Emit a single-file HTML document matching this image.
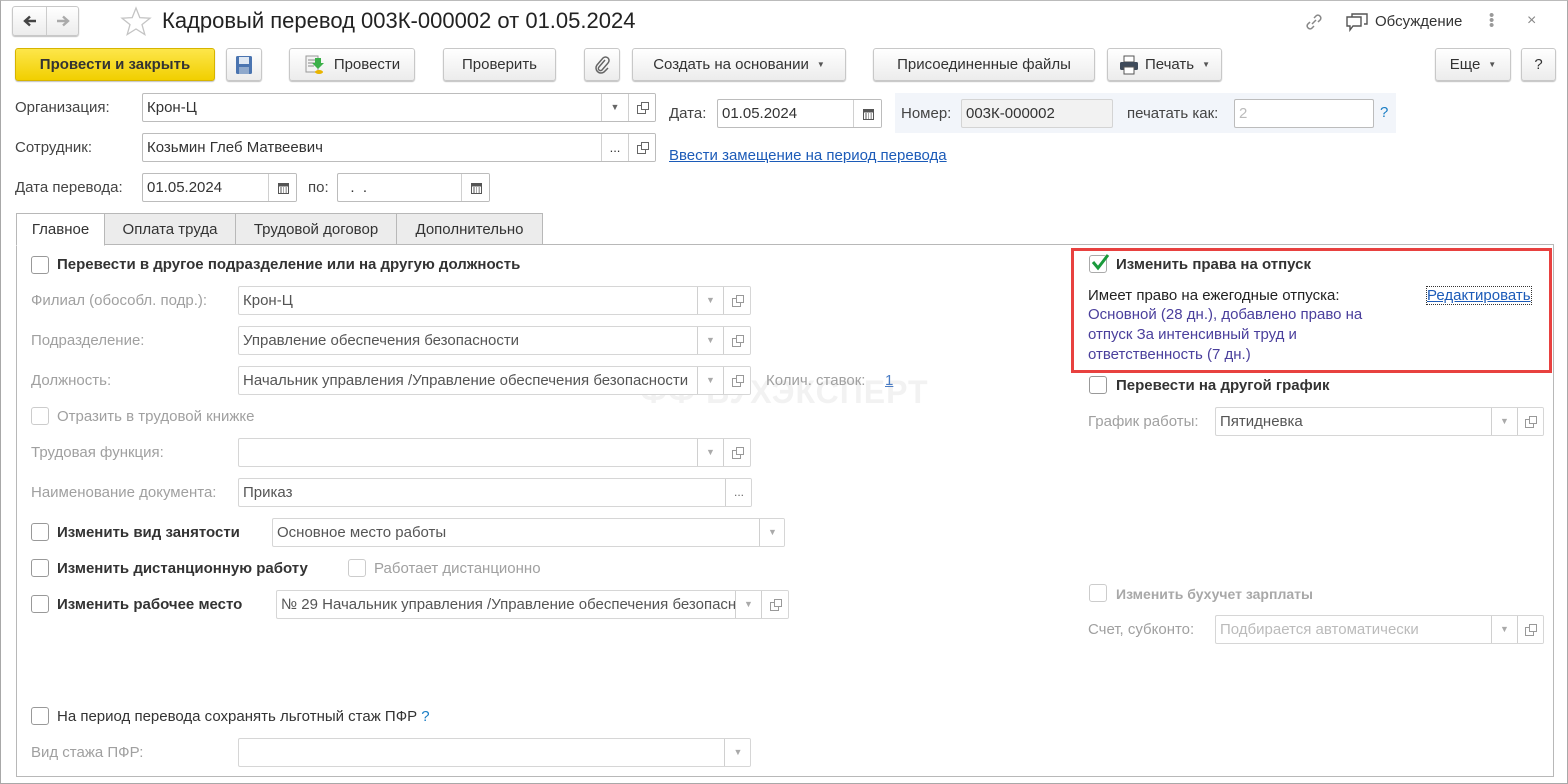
<!DOCTYPE html>
<html><head><meta charset="utf-8">
<style>
*{box-sizing:border-box;margin:0;padding:0}
body{width:1568px;height:784px;background:#fff;font-family:"Liberation Sans",Arial,sans-serif;font-size:15px;color:#333;position:relative;overflow:hidden}
.a{position:absolute;white-space:nowrap}
.btn{position:absolute;height:33px;border:1px solid #c8c8c8;border-radius:3px;background:linear-gradient(#fff,#ececec);box-shadow:0 1px 1px rgba(0,0,0,.25);font-size:15px;color:#333;display:flex;align-items:center;justify-content:center}
.inp{position:absolute;height:29px;border:1px solid #bcbcbc;border-radius:2px;background:#fff;font-size:15px;padding-left:4px;line-height:27px;color:#333;overflow:hidden;white-space:nowrap}
.dis{border-color:#d6d6d6;color:#555}
.seg{position:absolute;top:0;bottom:0;border-left:1px solid #d0d0d0;background:#fff;display:flex;align-items:center;justify-content:center;font-size:9px;color:#666}
.lbl{position:absolute;white-space:nowrap;color:#444;font-size:15px}
.g{color:#a0a0a0}
.cb{position:absolute;width:18px;height:18px;border:1px solid #999;border-radius:3px;background:#fff}
.cbd{border-color:#ccc}
.b{font-weight:bold;color:#333}
.tab{position:absolute;top:213px;height:32px;border:1px solid #b8b8b8;background:#ececec;font-size:15px;color:#333;display:flex;align-items:center;justify-content:center}
</style></head><body>
<div class="a" style="left:0;top:0;width:1568px;height:784px;border:1px solid #a8a8a8;border-top-color:#bbb"></div>
<!-- nav -->
<div class="btn" style="left:12px;top:6px;width:67px;height:30px;justify-content:flex-start">
 <span style="width:34px;display:flex;justify-content:center"><svg width="14" height="12" viewBox="0 0 14 12"><path d="M13 6 H3 M7 1.5 L2 6 L7 10.5" fill="none" stroke="#444" stroke-width="2.4"/></svg></span><span style="width:1px;height:28px;background:#ccc"></span><span style="width:31px;display:flex;justify-content:center"><svg width="14" height="12" viewBox="0 0 14 12"><path d="M1 6 H11 M7 1.5 L12 6 L7 10.5" fill="none" stroke="#aaa" stroke-width="2.4"/></svg></span>
</div>
<svg class="a" style="left:120px;top:6px" width="32" height="30" viewBox="0 0 32 30"><path d="M16 2 L19.8 11.6 L30 12.2 L22 18.6 L24.8 28.5 L16 23 L7.2 28.5 L10 18.6 L2 12.2 L12.2 11.6 Z" fill="none" stroke="#c4c4c4" stroke-width="1.3"/></svg>
<div class="a" style="left:162px;top:8px;font-size:22px;color:#222">Кадровый перевод 003К-000002 от 01.05.2024</div>
<svg class="a" style="left:1303px;top:11px" width="22" height="22" viewBox="0 0 22 22" fill="none" stroke="#888" stroke-width="1.5"><path d="M9 13 L13 9"/><path d="M7 11 L4.5 13.5 a3 3 0 0 0 4 4 L11 15"/><path d="M11 7 L13.5 4.5 a3 3 0 0 1 4 4 L15 11"/></svg>
<svg class="a" style="left:1345px;top:12px" width="24" height="22" viewBox="0 0 24 22" fill="none" stroke="#555" stroke-width="1.4"><path d="M2 5 h14 v9 h-8 l-3 4 v-4 h-3 z"/><path d="M7 5 v-3 h15 v10 h-3"/></svg>
<div class="a" style="left:1375px;top:13px;font-size:15px;color:#333">Обсуждение</div>
<div class="a" style="left:1489px;top:13px;width:4px;font-size:15px;color:#999;line-height:5px">•<br>•<br>•</div>
<div class="a" style="left:1527px;top:12px;font-size:16px;color:#888">×</div>
<!-- toolbar -->
<div class="btn" style="left:15px;top:48px;width:200px;background:linear-gradient(#fde64a,#f1cf00);border-color:#d6b400;font-weight:bold;color:#333">Провести и закрыть</div>
<div class="btn" style="left:226px;top:48px;width:36px"><svg width="18" height="20" viewBox="0 0 18 20"><rect x="1" y="1" width="16" height="18" rx="1.5" fill="#4a74b0"/><rect x="4" y="2" width="10" height="7" fill="#dfe8f3"/><rect x="4" y="12" width="10" height="7" fill="#8fa9cc"/></svg></div>
<div class="btn" style="left:289px;top:48px;width:126px"><svg width="22" height="22" viewBox="0 0 22 22" style="margin-right:8px"><rect x="2" y="2" width="12" height="16" fill="#f4f4f4" stroke="#999"/><path d="M4 6h8M4 9h8M4 12h6" stroke="#888"/><path d="M11 4 h6 v5 h3 l-6 6 l-6-6 h3z" fill="#3cb04a"/><ellipse cx="15" cy="18" rx="4" ry="2" fill="#e8b400"/></svg>Провести</div>
<div class="btn" style="left:443px;top:48px;width:113px">Проверить</div>
<div class="btn" style="left:584px;top:48px;width:36px"><svg width="18" height="20" viewBox="0 0 18 20" fill="none" stroke="#666" stroke-width="1.5"><path d="M12 5 L6 12 a2 2 0 0 0 3 3 L15 8 a3.5 3.5 0 0 0 -5 -5 L4 10 a5 5 0 0 0 7 7 L15 13"/></svg></div>
<div class="btn" style="left:632px;top:48px;width:214px">Создать на основании <span style="font-size:8px;margin-left:8px;color:#555">▼</span></div>
<div class="btn" style="left:873px;top:48px;width:222px">Присоединенные файлы</div>
<div class="btn" style="left:1107px;top:48px;width:115px"><svg width="20" height="20" viewBox="0 0 20 20" style="margin-right:6px"><rect x="5" y="1" width="10" height="6" fill="#fff" stroke="#555"/><rect x="1" y="7" width="18" height="8" rx="1.5" fill="#3e4a5a"/><rect x="5" y="12" width="10" height="7" fill="#fff" stroke="#555"/></svg>Печать <span style="font-size:8px;margin-left:8px;color:#555">▼</span></div>
<div class="btn" style="left:1435px;top:48px;width:76px">Еще <span style="font-size:8px;margin-left:8px;color:#555">▼</span></div>
<div class="btn" style="left:1521px;top:48px;width:35px">?</div>
<!-- header fields -->
<div class="lbl" style="left:15px;top:99px">Организация:</div>
<div class="inp" style="left:142px;top:93px;width:514px">Крон-Ц<div class="seg" style="left:458px;width:27px">▼</div><div class="seg" style="left:485px;width:28px"><svg width="12" height="12" viewBox="0 0 12 12" fill="none" stroke="#666"><rect x="4.5" y="0.5" width="7" height="7"/><path d="M4.5 3.5 h-4 v8 h8 v-4"/></svg></div></div>
<div class="lbl" style="left:15px;top:139px">Сотрудник:</div>
<div class="inp" style="left:142px;top:133px;width:514px">Козьмин Глеб Матвеевич<div class="seg" style="left:458px;width:27px;font-size:13px;color:#333">...</div><div class="seg" style="left:485px;width:28px"><svg width="12" height="12" viewBox="0 0 12 12" fill="none" stroke="#666"><rect x="4.5" y="0.5" width="7" height="7"/><path d="M4.5 3.5 h-4 v8 h8 v-4"/></svg></div></div>
<div class="lbl" style="left:15px;top:179px">Дата перевода:</div>
<div class="inp" style="left:142px;top:173px;width:155px">01.05.2024<div class="seg" style="left:125px;width:29px"><svg width="11" height="12" viewBox="0 0 11 12"><rect x="0.5" y="1.5" width="10" height="10" fill="none" stroke="#555"/><rect x="0.5" y="1.5" width="10" height="3" fill="#555"/><path d="M2 6h2M5 6h1M7.5 6h1.5M2 8h2M5 8h1M7.5 8h1.5M2 10h2M5 10h1M7.5 10h1.5" stroke="#555"/></svg></div></div>
<div class="lbl" style="left:308px;top:179px">по:</div>
<div class="inp" style="left:337px;top:173px;width:153px">&nbsp;&nbsp;.&nbsp;&nbsp;.<div class="seg" style="left:123px;width:29px"><svg width="11" height="12" viewBox="0 0 11 12"><rect x="0.5" y="1.5" width="10" height="10" fill="none" stroke="#555"/><rect x="0.5" y="1.5" width="10" height="3" fill="#555"/><path d="M2 6h2M5 6h1M7.5 6h1.5M2 8h2M5 8h1M7.5 8h1.5M2 10h2M5 10h1M7.5 10h1.5" stroke="#555"/></svg></div></div>
<div class="lbl" style="left:669px;top:105px">Дата:</div>
<div class="inp" style="left:717px;top:99px;width:165px">01.05.2024<div class="seg" style="left:135px;width:29px"><svg width="11" height="12" viewBox="0 0 11 12"><rect x="0.5" y="1.5" width="10" height="10" fill="none" stroke="#555"/><rect x="0.5" y="1.5" width="10" height="3" fill="#555"/><path d="M2 6h2M5 6h1M7.5 6h1.5M2 8h2M5 8h1M7.5 8h1.5M2 10h2M5 10h1M7.5 10h1.5" stroke="#555"/></svg></div></div>
<div class="a" style="left:895px;top:93px;width:501px;height:40px;background:#f2f5fa"></div>
<div class="lbl" style="left:901px;top:105px">Номер:</div>
<div class="inp" style="left:961px;top:99px;width:152px;background:#f2f2f2;border-color:#d4d4d4">003К-000002</div>
<div class="lbl" style="left:1127px;top:105px">печатать как:</div>
<div class="inp" style="left:1234px;top:99px;width:140px;color:#bbb">2</div>
<div class="a" style="left:1380px;top:104px;color:#1a7dc4;font-size:15px">?</div>
<div class="a" style="left:669px;top:147px;color:#1c5bb8;text-decoration:underline">Ввести замещение на период перевода</div>
<!-- tabs -->
<div class="a" style="left:16px;top:244px;width:1538px;height:533px;border:1px solid #b8b8b8"></div>
<div class="tab" style="left:16px;width:89px;background:#fff;border-bottom-color:#fff;height:33px">Главное</div>
<div class="tab" style="left:104px;width:132px">Оплата труда</div>
<div class="tab" style="left:235px;width:162px">Трудовой договор</div>
<div class="tab" style="left:396px;width:147px">Дополнительно</div>
<!-- watermark -->
<div class="a" style="left:640px;top:374px;font-size:32px;font-weight:bold;color:#f2f2f2;letter-spacing:1px">ФФ БУХЭКСПЕРТ</div>
<!-- left content -->
<div class="cb" style="left:31px;top:256px"></div><div class="a b" style="left:57px;top:256px">Перевести в другое подразделение или на другую должность</div>
<div class="lbl g" style="left:31px;top:292px">Филиал (обособл. подр.):</div>
<div class="inp dis" style="left:238px;top:286px;width:513px">Крон-Ц<div class="seg" style="left:458px;width:26px;color:#aaa">▼</div><div class="seg" style="left:484px;width:28px"><svg width="12" height="12" viewBox="0 0 12 12" fill="none" stroke="#999"><rect x="4.5" y="0.5" width="7" height="7"/><path d="M4.5 3.5 h-4 v8 h8 v-4"/></svg></div></div>
<div class="lbl g" style="left:31px;top:332px">Подразделение:</div>
<div class="inp dis" style="left:238px;top:326px;width:513px">Управление обеспечения безопасности<div class="seg" style="left:458px;width:26px;color:#aaa">▼</div><div class="seg" style="left:484px;width:28px"><svg width="12" height="12" viewBox="0 0 12 12" fill="none" stroke="#999"><rect x="4.5" y="0.5" width="7" height="7"/><path d="M4.5 3.5 h-4 v8 h8 v-4"/></svg></div></div>
<div class="lbl g" style="left:31px;top:372px">Должность:</div>
<div class="inp dis" style="left:238px;top:366px;width:513px">Начальник управления /Управление обеспечения безопасности<div class="seg" style="left:458px;width:26px;color:#aaa">▼</div><div class="seg" style="left:484px;width:28px"><svg width="12" height="12" viewBox="0 0 12 12" fill="none" stroke="#999"><rect x="4.5" y="0.5" width="7" height="7"/><path d="M4.5 3.5 h-4 v8 h8 v-4"/></svg></div></div>
<div class="lbl g" style="left:766px;top:372px">Колич. ставок:</div><div class="a" style="left:885px;top:372px;color:#4a7cc4;text-decoration:underline">1</div>
<div class="cb cbd" style="left:31px;top:407px"></div><div class="lbl g" style="left:57px;top:408px">Отразить в трудовой книжке</div>
<div class="lbl g" style="left:31px;top:444px">Трудовая функция:</div>
<div class="inp dis" style="left:238px;top:438px;width:513px"><div class="seg" style="left:458px;width:26px;color:#aaa">▼</div><div class="seg" style="left:484px;width:28px"><svg width="12" height="12" viewBox="0 0 12 12" fill="none" stroke="#999"><rect x="4.5" y="0.5" width="7" height="7"/><path d="M4.5 3.5 h-4 v8 h8 v-4"/></svg></div></div>
<div class="lbl g" style="left:31px;top:484px">Наименование документа:</div>
<div class="inp dis" style="left:238px;top:478px;width:514px">Приказ<div class="seg" style="left:486px;width:27px;font-size:12px;color:#666">...</div></div>
<div class="cb" style="left:31px;top:523px"></div><div class="a b" style="left:57px;top:524px">Изменить вид занятости</div>
<div class="inp dis" style="left:272px;top:518px;width:513px">Основное место работы<div class="seg" style="left:486px;width:26px;color:#aaa">▼</div></div>
<div class="cb" style="left:31px;top:559px"></div><div class="a b" style="left:57px;top:560px">Изменить дистанционную работу</div>
<div class="cb cbd" style="left:348px;top:559px"></div><div class="lbl g" style="left:374px;top:560px">Работает дистанционно</div>
<div class="cb" style="left:31px;top:595px"></div><div class="a b" style="left:57px;top:596px">Изменить рабочее место</div>
<div class="inp dis" style="left:276px;top:590px;width:513px">№ 29 Начальник управления /Управление обеспечения безопасности<div class="seg" style="left:458px;width:26px;color:#aaa">▼</div><div class="seg" style="left:484px;width:28px"><svg width="12" height="12" viewBox="0 0 12 12" fill="none" stroke="#999"><rect x="4.5" y="0.5" width="7" height="7"/><path d="M4.5 3.5 h-4 v8 h8 v-4"/></svg></div></div>
<div class="cb" style="left:31px;top:707px"></div><div class="lbl" style="left:57px;top:708px;color:#333">На период перевода сохранять льготный стаж ПФР <span style="color:#1a7dc4">?</span></div>
<div class="lbl g" style="left:31px;top:744px">Вид стажа ПФР:</div>
<div class="inp dis" style="left:238px;top:738px;width:513px"><div class="seg" style="left:485px;width:27px;color:#aaa">▼</div></div>
<!-- right content -->
<div class="a" style="left:1071px;top:248px;width:481px;height:125px;border:3px solid #e8413f"></div>
<div class="cb" style="left:1089px;top:255px;border-color:#aaa"></div>
<svg class="a" style="left:1090px;top:252px" width="20" height="20" viewBox="0 0 20 20"><path d="M3 10 L8 16 L18 3" fill="none" stroke="#1a9a3c" stroke-width="3"/></svg>
<div class="a b" style="left:1116px;top:256px">Изменить права на отпуск</div>
<div class="a" style="left:1088px;top:287px;color:#222">Имеет право на ежегодные отпуска:</div>
<div class="a" style="left:1427px;top:287px;color:#1c5bb8;text-decoration:underline;outline:1px dotted #333">Редактировать</div>
<div class="a" style="left:1088px;top:305px;color:#4a3f9c;line-height:20px">Основной (28 дн.), добавлено право на<br>отпуск За интенсивный труд и<br>ответственность (7 дн.)</div>
<div class="cb" style="left:1089px;top:376px"></div><div class="a b" style="left:1116px;top:377px">Перевести на другой график</div>
<div class="lbl g" style="left:1088px;top:413px">График работы:</div>
<div class="inp dis" style="left:1215px;top:407px;width:329px">Пятидневка<div class="seg" style="left:275px;width:26px;color:#aaa">▼</div><div class="seg" style="left:301px;width:27px"><svg width="12" height="12" viewBox="0 0 12 12" fill="none" stroke="#999"><rect x="4.5" y="0.5" width="7" height="7"/><path d="M4.5 3.5 h-4 v8 h8 v-4"/></svg></div></div>
<div class="cb cbd" style="left:1089px;top:584px"></div><div class="a" style="left:1116px;top:586px;font-weight:bold;color:#a8a8a8;font-size:14px">Изменить бухучет зарплаты</div>
<div class="lbl g" style="left:1088px;top:621px">Счет, субконто:</div>
<div class="inp dis" style="left:1215px;top:615px;width:329px;color:#bbb">Подбирается автоматически<div class="seg" style="left:275px;width:26px;color:#aaa">▼</div><div class="seg" style="left:301px;width:27px"><svg width="12" height="12" viewBox="0 0 12 12" fill="none" stroke="#999"><rect x="4.5" y="0.5" width="7" height="7"/><path d="M4.5 3.5 h-4 v8 h8 v-4"/></svg></div></div>
</body></html>
